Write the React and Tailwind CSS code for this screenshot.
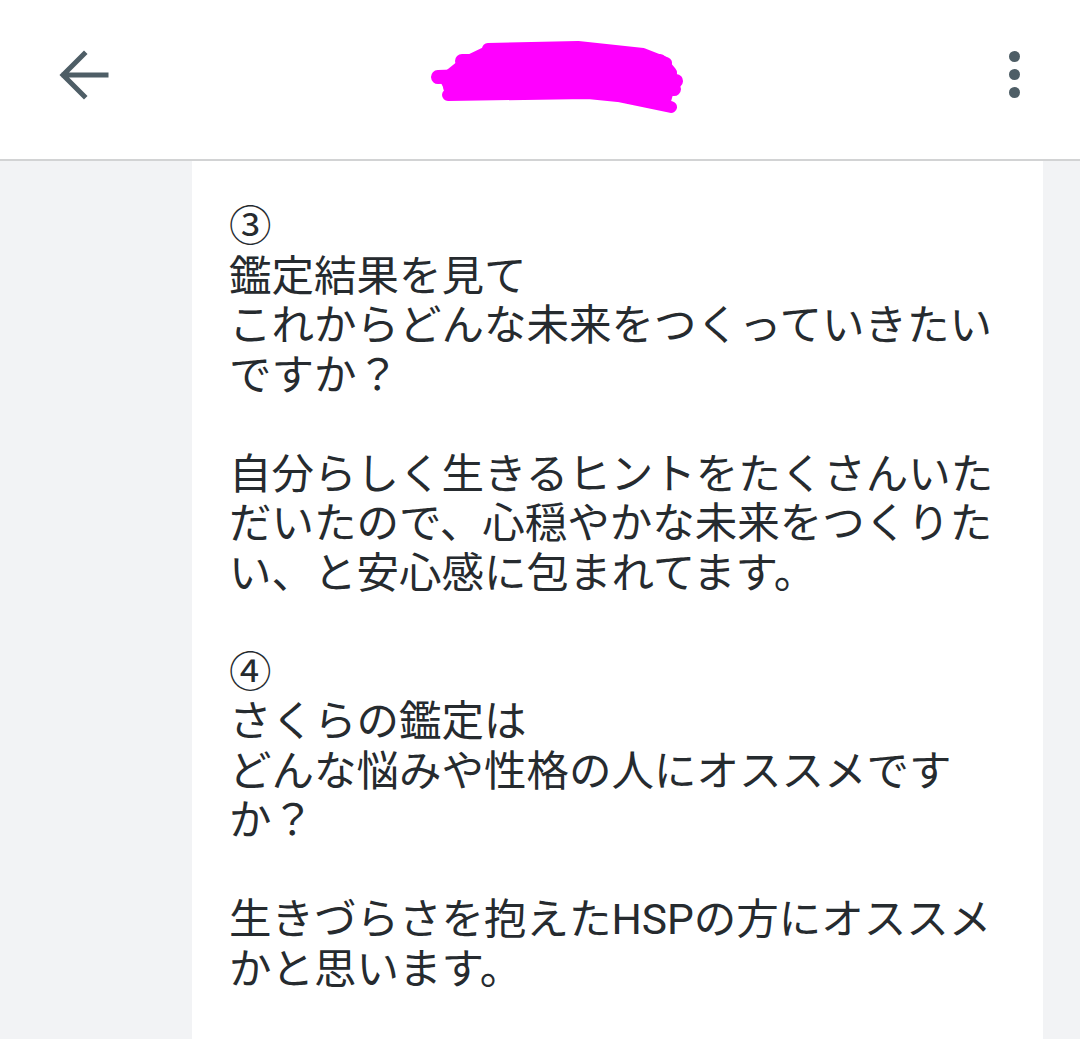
import { useState } from "react";

const paragraphs = [
  ["③", "鑑定結果を見て", "これからどんな未来をつくっていきたいですか？"],
  ["自分らしく生きるヒントをたくさんいただいたので、心穏やかな未来をつくりたい、と安心感に包まれてます。"],
  ["④", "さくらの鑑定は", "どんな悩みや性格の人にオススメですか？"],
  ["生きづらさを抱えたHSPの方にオススメかと思います。"],
];

function BackArrow() {
  return (
    <svg width="52" height="52" viewBox="0 0 52 52" fill="none">
      <path
        d="M48 26H6M26 5L5 26l21 21"
        stroke="#4e5e66"
        strokeWidth="5"
        strokeLinecap="square"
      />
    </svg>
  );
}

// marker scribble that hides the name
function Scribble() {
  return (
    <svg width="270" height="80" viewBox="0 0 270 80" fill="none">
      <path
        d="M60 10 L150 10 L215 17 L240 26 L246 40 L246 56 L242 70 L190 58 L20 62 L10 42 L35 22 Z"
        fill="#ff00ff"
      />
      <g stroke="#ff00ff" strokeLinecap="round" strokeLinejoin="round">
        <path d="M60 14 L150 12 L215 19 L238 28" strokeWidth="12" />
        <path d="M34 26 L232 26 L242 38" strokeWidth="14" />
        <path d="M10 42 L120 38 L248 46" strokeWidth="14" />
        <path d="M22 52 L150 50 L246 54" strokeWidth="14" />
        <path d="M20 60 L160 58 L190 61 L243 72" strokeWidth="12" />
      </g>
    </svg>
  );
}

function Kebab() {
  return (
    <div className="flex flex-col items-center gap-[7px]">
      <span className="block h-[11px] w-[11px] rounded-full bg-[#4e5e66]" />
      <span className="block h-[11px] w-[11px] rounded-full bg-[#4e5e66]" />
      <span className="block h-[11px] w-[11px] rounded-full bg-[#4e5e66]" />
    </div>
  );
}

export default function App() {
  const [open] = useState(false);

  return (
    <div className="flex h-[1039px] w-[1080px] flex-col overflow-hidden bg-[#f2f3f5] font-['Roboto','Noto_Sans_CJK_JP',sans-serif]">
      <header className="flex h-[161px] shrink-0 items-center justify-between border-b-2 border-[#d2d3d4] bg-white pb-[10px] pl-[58px] pr-[60px]">
        <button type="button" className="flex items-center">
          <BackArrow />
        </button>
        <div className="ml-[318px] mr-auto flex items-center">
          <Scribble />
        </div>
        <button type="button" aria-expanded={open}>
          <Kebab />
        </button>
      </header>

      <div className="flex flex-1 pl-[192px] pr-[37px]">
        <div className="flex-1 bg-white pl-[37px] pr-[40px] pt-[41px]">
          <div className="flex flex-col gap-[49.5px] text-[42.5px] leading-[49.5px] text-[#262b2f]">
            {paragraphs.map((lines, i) => (
              <div key={i}>
                {lines.map((l, j) => (
                  <div key={j} className="break-all">
                    {l}
                  </div>
                ))}
              </div>
            ))}
          </div>
        </div>
      </div>
    </div>
  );
}
